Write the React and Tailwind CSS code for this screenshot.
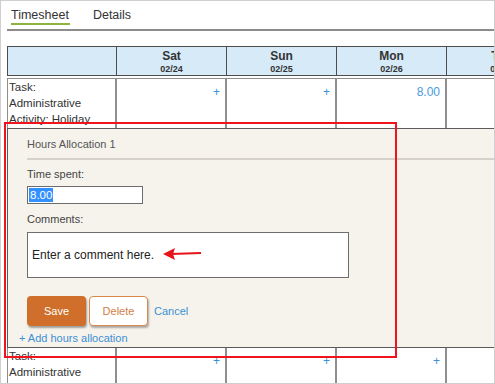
import React from "react";

const days = [
  { name: "Sat", date: "02/24" },
  { name: "Sun", date: "02/25" },
  { name: "Mon", date: "02/26" },
  { name: "Tue", date: "02/27" },
];

const Plus = () => <span className="text-[#3a8fd9] text-[12px]">+</span>;

// one body row of the grid
const TaskRow = ({ values, height }) => (
  <div className={`flex ${height} overflow-hidden border-l border-[#8f8f8f]`}>
    <div className="w-[109px] shrink-0 border-r-2 border-[#8f8f8f] pl-[1px] text-[11.5px] leading-[16px] text-[#333]">
      <div>Task:</div>
      <div>Administrative</div>
      <div>Activity: Holiday</div>
    </div>
    {values.map((v, i) => (
      <div
        key={i}
        className="w-[110px] shrink-0 border-r-2 border-[#8f8f8f] pr-[5px] pt-[4px] text-right leading-[16px]"
      >
        {v === "+" ? <Plus /> : v ? <span className="text-[12px] text-[#4a9be0]">{v}</span> : null}
      </div>
    ))}
  </div>
);

export default function App() {
  return (
    <div
      className="relative w-[495px] h-[384px] overflow-hidden bg-white border border-[#cfcfcf]"
      style={{ fontFamily: '"Liberation Sans", Arial, sans-serif' }}
    >
      <div className="ml-[6px] w-[600px]">
        {/* TABS */}
        <div className="h-[30px] border-b-2 border-[#8c8c8c] flex gap-[23px] pl-[4px] pt-[6px] text-[12.5px] text-[#333]">
          <div className="h-[18px] leading-[16px] border-b-2 border-[#8db53c] pr-[1px]">Timesheet</div>
          <div className="leading-[16px]">Details</div>
        </div>

        {/* HEADER */}
        <div className="mt-[15px] flex h-[30px] bg-[#d6eaf8] border-y border-l border-[#4d4d4d] text-[#333] font-bold">
          <div className="w-[109px] shrink-0 border-r border-[#4d4d4d]" />
          {days.map((d) => (
            <div
              key={d.name}
              className="w-[110px] shrink-0 border-r border-[#4d4d4d] flex flex-col items-center pt-[2px]"
            >
              <span className="text-[12px] leading-[14px]">{d.name}</span>
              <span className="text-[9px] leading-[12px]">{d.date}</span>
            </div>
          ))}
        </div>

        {/* ROW 1 */}
        <div className="mt-[2px] border-t border-[#8f8f8f]">
          <TaskRow values={["+", "+", "8.00", ""]} height="h-[49px]" />
        </div>

        {/* ALLOCATION PANEL */}
        <div className="bg-[#f6f3ec] border-t border-b border-l border-[#5a5a5a] h-[220px] text-[11px] text-[#444]">
          <div className="pl-[19px] pt-[7px]">
            <div className="leading-[16px] text-[#555]">Hours Allocation 1</div>
            <div className="mt-[6px] h-[2px] bg-[#d6d2ca]" />
            <div className="mt-[6px] leading-[16px]">Time spent:</div>
            <div className="mt-[4px] w-[116px] h-[18px] bg-white border border-[#6d6d6d] flex items-center px-[1px]">
              <span className="bg-[#3390ff] text-white text-[11.5px] leading-[14px] px-[1px]">8.00</span>
            </div>
            <div className="mt-[7px] leading-[16px]">Comments:</div>
            <div className="mt-[5px] w-[322px] h-[46px] bg-white border border-[#6d6d6d] flex items-center pl-[4px] text-[12px] text-[#222]">
              Enter a comment here.
            </div>
            <div className="mt-[18px] flex items-center gap-[3px]">
              <button className="w-[59px] h-[30px] rounded-[4px] bg-[#cf6f2b] text-white text-[11px] shadow-[1px_2px_2px_rgba(0,0,0,0.35)]">
                Save
              </button>
              <button className="w-[59px] h-[30px] rounded-[4px] bg-white border border-[#d98a4f] text-[#d07e47] text-[11px] shadow-[1px_2px_2px_rgba(0,0,0,0.3)]">
                Delete
              </button>
              <span className="ml-[3px] text-[#3b8fd4]">Cancel</span>
            </div>
          </div>
          <div className="pl-[11px] mt-[4px] leading-[16px] text-[#3b8fd4]">+ Add hours allocation</div>
        </div>

        {/* ROW 2 */}
        <TaskRow values={["+", "+", "+", ""]} height="h-[40px]" />
      </div>

      {/* annotation */}
      <div className="absolute left-[3px] top-[121px] w-[393px] h-[236px] border-2 border-[#f0141c]" />
      <svg className="absolute left-[162px] top-[246px]" width="40" height="14" viewBox="0 0 40 14">
        <line x1="8" y1="7" x2="38" y2="6" stroke="#e8131a" strokeWidth="2" />
        <polygon points="0,7 12,1 10,7 12,13" fill="#e8131a" />
      </svg>
    </div>
  );
}
